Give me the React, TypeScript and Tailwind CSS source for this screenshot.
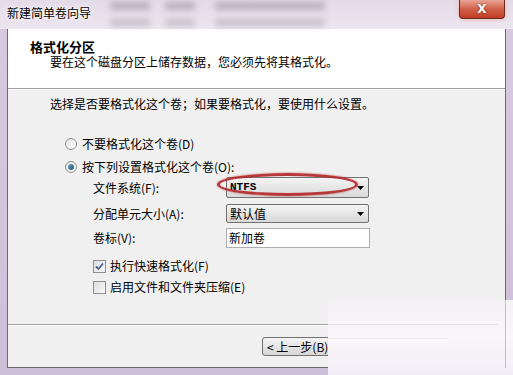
import React from 'react';

const font = "font-['Noto_Sans_CJK_SC','Noto_Sans',sans-serif]";

const Radio: React.FC<{ checked?: boolean; label: string }> = ({ checked, label }) => (
  <div className="flex h-[18px] items-center">
    <span className="flex h-[12px] w-[12px] items-center justify-center rounded-full border border-[#8e8f8f] bg-gradient-to-br from-[#e6e6e6] to-[#fbfbfb]">
      {checked && <span className="h-[6px] w-[6px] rounded-full bg-gradient-to-br from-[#6fa4c8] to-[#1d4f73]" />}
    </span>
    <span className="ml-[5px] text-[12px] leading-none text-black">{label}</span>
  </div>
);

const Check: React.FC<{ checked?: boolean; label: string }> = ({ checked, label }) => (
  <div className="flex h-[16px] items-center">
    <span className="flex h-[13px] w-[13px] items-center justify-center border border-[#8e8f8f] bg-gradient-to-br from-[#dcdcdc] to-[#fafafa]">
      {checked && (
        <svg width="9" height="9" viewBox="0 0 9 9">
          <path d="M1 4.5 L3.5 7 L8 1.5" fill="none" stroke="#4a5f97" strokeWidth="1.8" />
        </svg>
      )}
    </span>
    <span className="ml-[4px] text-[12px] leading-none text-black">{label}</span>
  </div>
);

const Combo: React.FC<{ value: string; mono?: boolean }> = ({ value, mono }) => (
  <div className="flex h-full w-[143px] items-center justify-between rounded-[2px] border border-[#707070] bg-gradient-to-b from-[#f4f4f4] to-[#d9d9d9] px-[3px]">
    <span className={mono ? "font-['Liberation_Mono',monospace] text-[11px] font-bold" : 'text-[12px]'}>{value}</span>
    <svg width="7" height="4" viewBox="0 0 7 4" className="mr-[1px]">
      <path d="M0 0 H7 L3.5 4 Z" fill="#000" />
    </svg>
  </div>
);

const FieldRow: React.FC<{ label: string; h: string; mt: string; children: React.ReactNode }> = ({ label, h, mt, children }) => (
  <div className={`flex items-center ${h} ${mt}`}>
    <span className="w-[218px] shrink-0 pl-[85px] text-[12px] leading-none whitespace-nowrap">{label}</span>
    <div className="relative h-full">{children}</div>
  </div>
);

export default function App() {
  return (
    <div className={`relative h-[375px] w-[513px] overflow-hidden bg-gradient-to-b from-[#d8cbe0] to-[#cdbfd8] ${font}`}>
      {/* title bar */}
      <div className="relative h-[29px] bg-gradient-to-b from-[#e4dbe9] to-[#ece6f0]">
        <div className="absolute left-[110px] top-[2px] h-[8px] w-[40px] bg-[#8a8590] opacity-50 blur-[3px]" />
        <div className="absolute left-[165px] top-[2px] h-[8px] w-[30px] bg-[#8a8590] opacity-50 blur-[3px]" />
        <div className="absolute left-[215px] top-[2px] h-[8px] w-[110px] bg-[#8a8590] opacity-50 blur-[3px]" />
        <div className="absolute left-[110px] top-[19px] h-[7px] w-[40px] bg-[#8a8590] opacity-40 blur-[3px]" />
        <div className="absolute left-[165px] top-[19px] h-[7px] w-[30px] bg-[#8a8590] opacity-40 blur-[3px]" />
        <div className="absolute left-[215px] top-[19px] h-[7px] w-[110px] bg-[#8a8590] opacity-40 blur-[3px]" />
        <span className="absolute left-[7px] top-[7px] text-[12px] leading-none text-black [text-shadow:0_0_6px_#fff,0_0_3px_#fff]">
          新建简单卷向导
        </span>
        <div className="absolute right-[8px] top-0 flex h-[19px] w-[46px] items-center justify-center rounded-b-[4px] border border-t-0 border-[#6b2a22] bg-gradient-to-b from-[#e9a395] via-[#d0604a] to-[#c23b22] shadow-[0_0_4px_#f5b0a0]">
          <span className="font-['DejaVu_Sans',sans-serif] text-[12px] font-bold leading-none text-white [text-shadow:0_0_2px_#5a1a10]">X</span>
        </div>
      </div>

      {/* window body */}
      <div className="ml-[7px] flex h-[339px] w-[499px] flex-col border-x border-b border-[#6e6a72] bg-[#f0f0f0] text-black">
        <div className="h-[60px] border-b border-[#a0a0a0] bg-white pt-[9px]">
          <div className="ml-[22px] flex h-[16px] items-center text-[13px] font-bold leading-none">格式化分区</div>
          <div className="ml-[42px] flex h-[16px] items-center text-[12px] leading-none">要在这个磁盘分区上储存数据，您必须先将其格式化。</div>
        </div>
        <div className="h-[235px] border-t border-white pt-[6px]">
          <div className="ml-[42px] flex h-[16px] items-center text-[12px] leading-none">
            选择是否要格式化这个卷；如果要格式化，要使用什么设置。
          </div>
          <div className="ml-[57px] mt-[23px]">
            <Radio label="不要格式化这个卷(D)" />
          </div>
          <div className="ml-[57px] mt-[5px]">
            <Radio checked label="按下列设置格式化这个卷(O):" />
          </div>
          <FieldRow label="文件系统(F):" h="h-[21px]" mt="mt-[1px]">
            <Combo value="NTFS" mono />
            <div className="absolute left-[-9px] top-[-4px] h-[23px] w-[141px] rounded-[50%] border-[3px] border-[#b3262a] opacity-90 shadow-[0_0_2px_#c04040]" />
          </FieldRow>
          <FieldRow label="分配单元大小(A):" h="h-[19px]" mt="mt-[6px]">
            <Combo value="默认值" />
          </FieldRow>
          <FieldRow label="卷标(V):" h="h-[20px]" mt="mt-[5px]">
            <div className="flex h-full w-[144px] items-center border border-[#abadb3] bg-white px-[2px] text-[12px] leading-none">新加卷</div>
          </FieldRow>
          <div className="ml-[85px] mt-[10px]">
            <Check checked label="执行快速格式化(F)" />
          </div>
          <div className="ml-[85px] mt-[5px]">
            <Check label="启用文件和文件夹压缩(E)" />
          </div>
        </div>
        <div className="border-t border-[#a0a0a0]" />
        <div className="flex-1 border-t border-white pl-[254px] pt-[11px]">
          <div className="flex h-[19px] w-[75px] items-center rounded-[3px] border border-[#707070] bg-gradient-to-b from-[#f4f4f4] to-[#d6d6d6] pl-[4px] text-[12px] leading-none">
            &lt; 上一步(B)
          </div>
        </div>
      </div>

      {/* washed-out corner (watermark) */}
      <div className="absolute left-[328px] top-[300px] h-[75px] w-[185px] bg-gradient-to-b from-[#f4f2f5] via-[#f9f7fa] to-[#f3eef6]">
        <div className="absolute left-0 top-[24px] h-[1px] w-[170px] bg-[#e4e0e6]" />
        <div className="absolute left-0 top-[38px] h-[1px] w-[120px] bg-[#eceaee]" />
        <div className="absolute right-[7px] top-0 h-[68px] w-[1px] bg-[#c7bccd]" />
      </div>
    </div>
  );
}
